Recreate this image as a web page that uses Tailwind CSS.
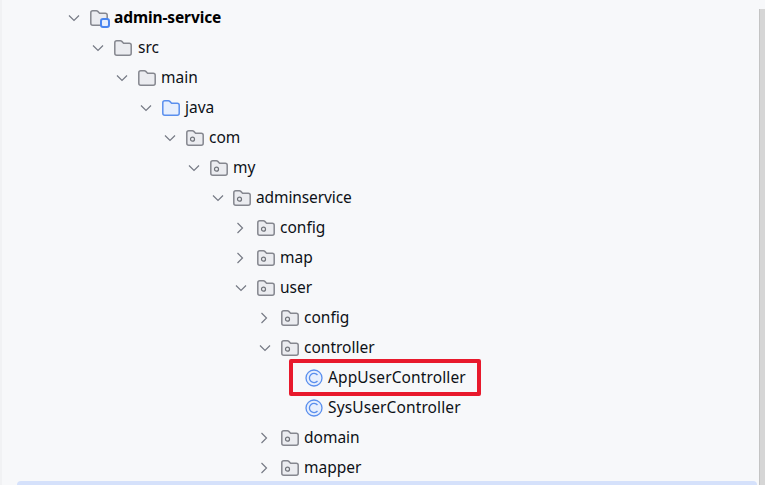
<!DOCTYPE html>
<html lang="en">
<head>
<meta charset="UTF-8">
<title>Project tree</title>
<script src="https://cdn.jsdelivr.net/npm/@tailwindcss/browser@4"></script>
</head>
<body class="overflow-hidden">
<svg class="hidden">
  <symbol id="down" viewBox="0 0 16 16"><path d="M3 5.500 8 10.500 13 5.500" fill="none" stroke="#767a85" stroke-width="1.200"/></symbol>
  <symbol id="right" viewBox="0 0 16 16"><path d="M5.500 3 10.500 8 5.500 13" fill="none" stroke="#767a85" stroke-width="1.200"/></symbol>
  <symbol id="folder" viewBox="0 0 18 16"><path d="M.8 2.800C.8 1.600 1.600.8 2.800.8h3.600c.6 0 1 .2 1.400.6L9.600 3.200H15.200c1.200 0 2 .8 2 2v8c0 1.200-.8 2-2 2H2.800c-1.200 0-2-.8-2-2z" fill="#ebecf0" stroke="#85878f" stroke-width="1.500"/></symbol>
  <symbol id="pkg" viewBox="0 0 18 16"><path d="M.8 2.800C.8 1.600 1.600.8 2.800.8h3.600c.6 0 1 .2 1.400.6L9.600 3.200H15.200c1.200 0 2 .8 2 2v8c0 1.200-.8 2-2 2H2.800c-1.200 0-2-.8-2-2z" fill="#ebecf0" stroke="#85878f" stroke-width="1.500"/><circle cx="6.500" cy="9.200" r="2" fill="none" stroke="#6f7279" stroke-width="1.200"/></symbol>
  <symbol id="cls" viewBox="0 0 18 18"><circle cx="9" cy="9" r="8" fill="#e7effd" stroke="#5a8fee" stroke-width="1.300"/><path d="M12.500 6A4.600 4.600 0 1 0 12.500 12" fill="none" stroke="#5a8fee" stroke-width="1.300"/></symbol>
</svg>

<div class="relative w-[765px] h-[485px] bg-[#f7f8fa] border-l-2 border-[#f1f2f4] font-['Noto_Sans',sans-serif] text-[15.5px] text-[#0d1117]">
  <div class="flex flex-col pt-[3px] -ml-[2px]">

    <div class="flex items-center h-[30px] pl-[66px]">
      <svg class="w-4 h-4 mr-[8px]"><use href="#down"/></svg>
      <span class="relative w-[18px] h-4 mr-[6px]">
        <svg class="w-[18px] h-4"><use href="#folder"/></svg>
        <span class="absolute left-[10px] top-[8px] w-[10px] h-[10px] rounded-[3px] border-2 border-[#4a86f0] bg-[#e7effd]"></span>
      </span>
      <span class="font-bold text-black tracking-[-0.1px]">admin-service</span>
    </div>

    <div class="flex items-center h-[30px] pl-[90px]">
      <svg class="w-4 h-4 mr-[8px]"><use href="#down"/></svg>
      <svg class="w-[18px] h-4 mr-[6px]"><use href="#folder"/></svg>
      <span>src</span>
    </div>

    <div class="flex items-center h-[30px] pl-[114px]">
      <svg class="w-4 h-4 mr-[8px]"><use href="#down"/></svg>
      <svg class="w-[18px] h-4 mr-[5px]"><use href="#folder"/></svg>
      <span>main</span>
    </div>

    <div class="flex items-center h-[30px] pl-[138px]">
      <svg class="w-4 h-4 mr-[8px]"><use href="#down"/></svg>
      <svg class="w-[18px] h-4 mr-[5px]" viewBox="0 0 18 16"><path d="M.8 2.800C.8 1.600 1.600.8 2.800.8h3.600c.6 0 1 .2 1.400.6L9.600 3.200H15.200c1.200 0 2 .8 2 2v8c0 1.200-.8 2-2 2H2.800c-1.200 0-2-.8-2-2z" fill="#e7effd" stroke="#5a8fee" stroke-width="1.500"/></svg>
      <span>java</span>
    </div>

    <div class="flex items-center h-[30px] pl-[162px]">
      <svg class="w-4 h-4 mr-[8px]"><use href="#down"/></svg>
      <svg class="w-[18px] h-4 mr-[5px]"><use href="#pkg"/></svg>
      <span>com</span>
    </div>

    <div class="flex items-center h-[30px] pl-[186px]">
      <svg class="w-4 h-4 mr-[8px]"><use href="#down"/></svg>
      <svg class="w-[18px] h-4 mr-[5px]"><use href="#pkg"/></svg>
      <span>my</span>
    </div>

    <div class="flex items-center h-[30px] pl-[210px]">
      <svg class="w-4 h-4 mr-[7px]"><use href="#down"/></svg>
      <svg class="w-[18px] h-4 mr-[5px]"><use href="#pkg"/></svg>
      <span class="tracking-[-0.1px]">adminservice</span>
    </div>

    <div class="flex items-center h-[30px] pl-[232px]">
      <svg class="w-4 h-4 mr-[9px]"><use href="#right"/></svg>
      <svg class="w-[18px] h-4 mr-[5px]"><use href="#pkg"/></svg>
      <span>config</span>
    </div>

    <div class="flex items-center h-[30px] pl-[232px]">
      <svg class="w-4 h-4 mr-[9px]"><use href="#right"/></svg>
      <svg class="w-[18px] h-4 mr-[5px]"><use href="#pkg"/></svg>
      <span>map</span>
    </div>

    <div class="flex items-center h-[30px] pl-[233px]">
      <svg class="w-4 h-4 mr-[8px]"><use href="#down"/></svg>
      <svg class="w-[18px] h-4 mr-[5px]"><use href="#pkg"/></svg>
      <span>user</span>
    </div>

    <div class="flex items-center h-[30px] pl-[256px]">
      <svg class="w-4 h-4 mr-[9px]"><use href="#right"/></svg>
      <svg class="w-[18px] h-4 mr-[5px]"><use href="#pkg"/></svg>
      <span>config</span>
    </div>

    <div class="flex items-center h-[30px] pl-[257px]">
      <svg class="w-4 h-4 mr-[8px]"><use href="#down"/></svg>
      <svg class="w-[18px] h-4 mr-[5px]"><use href="#pkg"/></svg>
      <span>controller</span>
    </div>

    <div class="flex items-center h-[30px] pl-[305px]">
      <svg class="w-[18px] h-[18px] mr-[5px]"><use href="#cls"/></svg>
      <span class="tracking-[0.12px]">AppUserController</span>
    </div>

    <div class="flex items-center h-[30px] pl-[305px]">
      <svg class="w-[18px] h-[18px] mr-[5px]"><use href="#cls"/></svg>
      <span class="tracking-[0.12px]">SysUserController</span>
    </div>

    <div class="flex items-center h-[30px] pl-[256px]">
      <svg class="w-4 h-4 mr-[9px]"><use href="#right"/></svg>
      <svg class="w-[18px] h-4 mr-[5px]"><use href="#pkg"/></svg>
      <span>domain</span>
    </div>

    <div class="flex items-center h-[30px] pl-[256px]">
      <svg class="w-4 h-4 mr-[9px]"><use href="#right"/></svg>
      <svg class="w-[18px] h-4 mr-[5px]"><use href="#pkg"/></svg>
      <span>mapper</span>
    </div>
  </div>

  <!-- selected row peeking in at the bottom -->
  <div class="absolute left-[15px] right-[8px] top-[481px] h-6 rounded-t-[4px] bg-[#d5e1fb]"></div>
  <!-- red annotation box -->
  <div class="absolute left-[287px] top-[359px] w-[192px] h-[37px] border-4 border-[#e8192c] rounded-[2px]"></div>
  <!-- scrollbar edge -->
  <div class="absolute right-0 top-[9px] w-[6px] h-[476px] bg-[#d6d6d6] border-l border-[#c4c4c4]"></div>
</div>
</body>
</html>
